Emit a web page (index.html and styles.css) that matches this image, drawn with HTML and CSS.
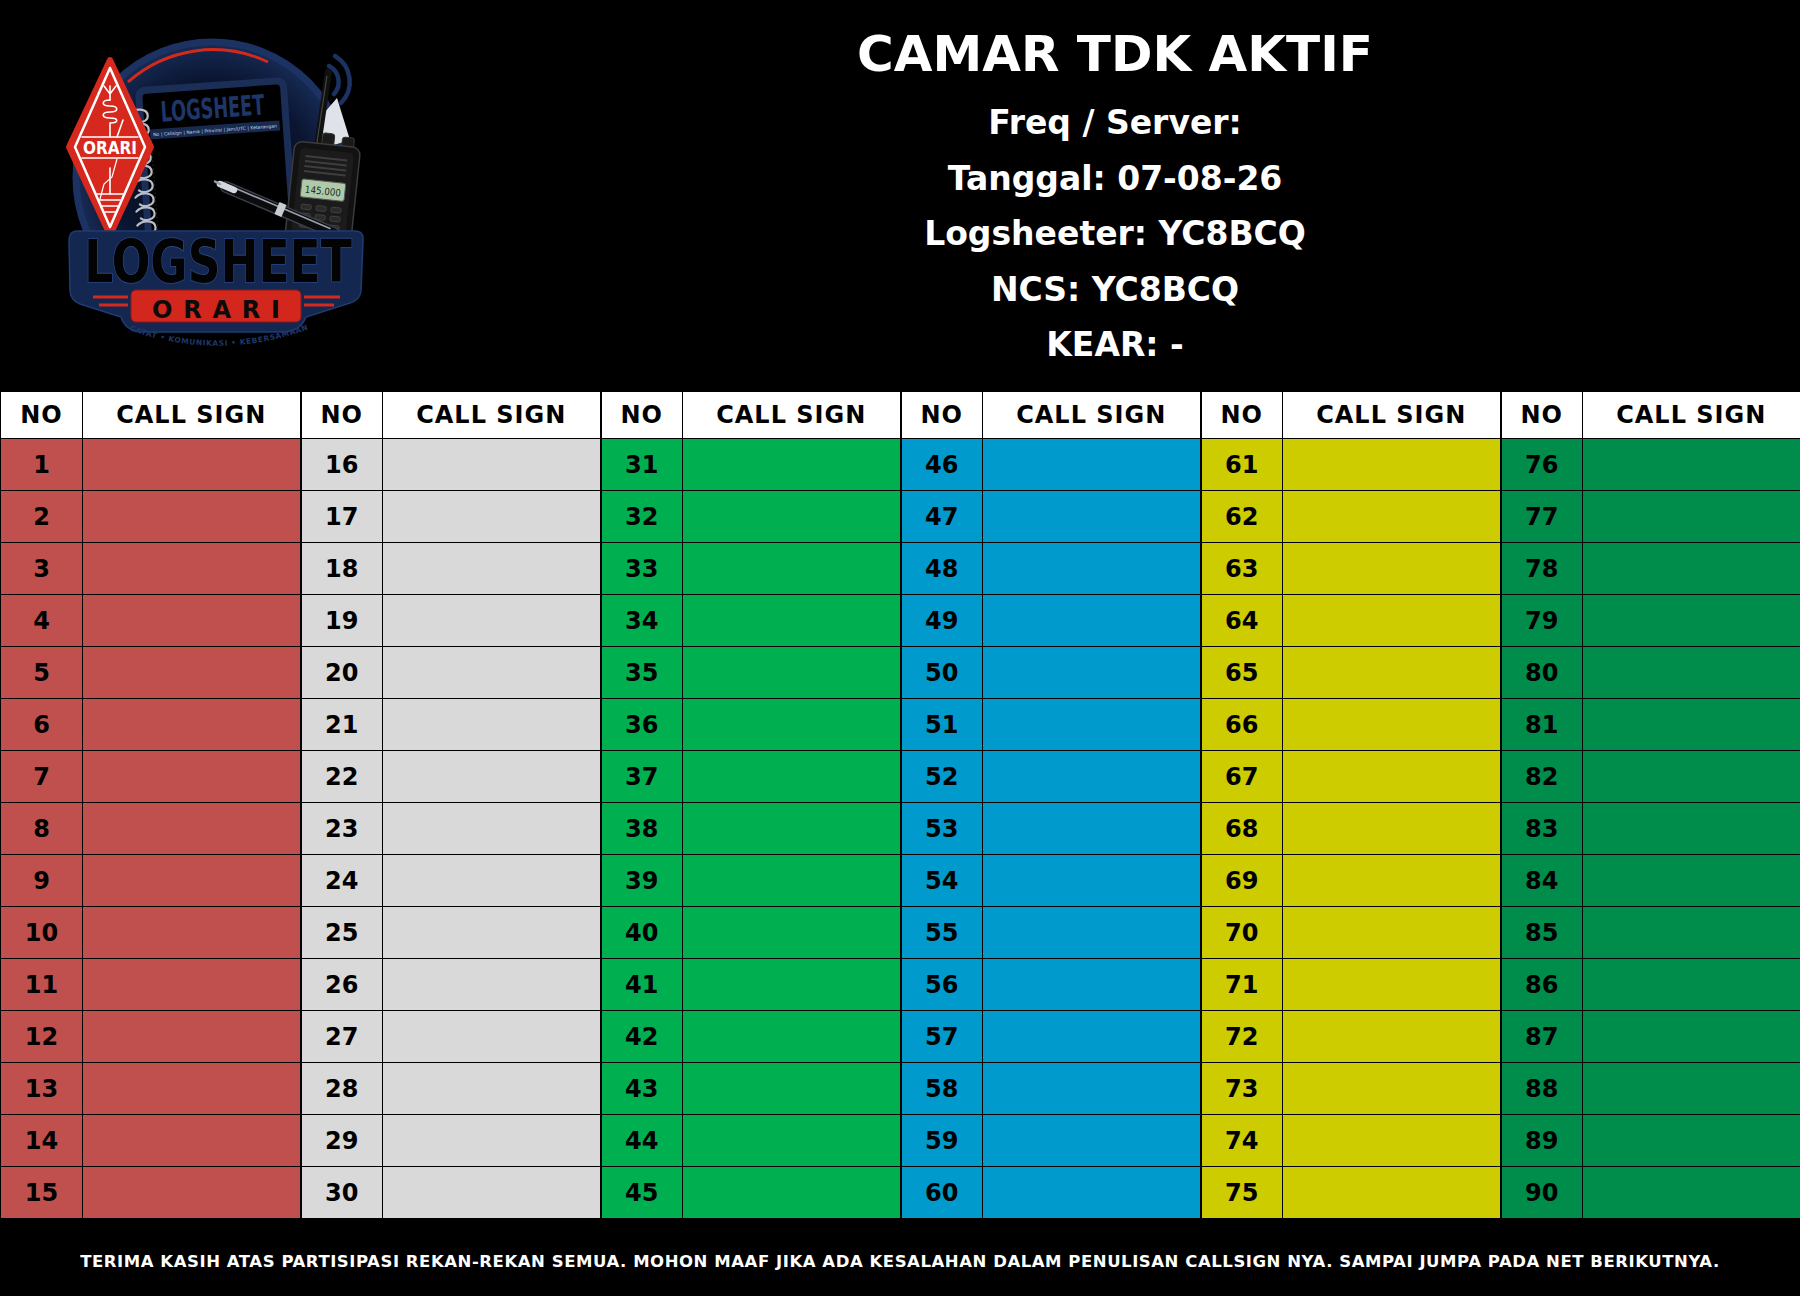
FILE: index.html
```html
<!DOCTYPE html>
<html lang="id">
<head>
<meta charset="utf-8">
<title>Logsheet ORARI - CAMAR TDK AKTIF</title>
<link rel="stylesheet" href="styles.css">
</head>
<body>
<div class="page">
  <header class="top">
    <div class="logo-col">
      <svg class="logo" width="310" height="330" viewBox="60 30 310 330" xmlns="http://www.w3.org/2000/svg">
        <defs>
          <radialGradient id="bgGrad" cx="50%" cy="50%" r="50%">
            <stop offset="0" stop-color="#03060e"/>
            <stop offset="0.72" stop-color="#0a1530"/>
            <stop offset="1" stop-color="#172b55"/>
          </radialGradient>
          <path id="arcText" d="M118,326 Q218,366 320,325"/>
        </defs>
        <circle cx="212" cy="178" r="136" fill="url(#bgGrad)" stroke="#1c3262" stroke-width="7"/>
        <path d="M128,82 A128,128 0 0 1 268,62" fill="none" stroke="#d42a1e" stroke-width="3"/>
        <polygon points="318,120 337,98 350,140 324,148" fill="#dfe2e8"/>
        <!-- notebook -->
        <g transform="rotate(-4 215 160)">
          <rect x="140" y="82" width="152" height="165" rx="9" fill="#1b2e58"/>
          <rect x="147" y="89" width="138" height="155" rx="4" fill="#000"/>
          <text x="216" y="118" text-anchor="middle" class="svg-bold" font-size="28" fill="#1f3668" textLength="104" lengthAdjust="spacingAndGlyphs">LOGSHEET</text>
          <rect x="152" y="125" width="130" height="10" fill="#172a50"/>
          <text x="155" y="132" class="svg-reg" font-size="4.6" fill="#c9d1e2" textLength="124" lengthAdjust="spacingAndGlyphs">No | Callsign | Nama | Provinsi | Jam/UTC | Keterangan</text>
          <line x1="153" y1="136" x2="153" y2="240" stroke="#222" stroke-width="1" stroke-dasharray="2 2"/>
          <g fill="none" stroke="#b8bdc7" stroke-width="2.2" stroke-linecap="round">
            <path d="M133,108 c6,-6 18,-4 18,3 c0,6 -10,8 -14,4"/>
            <path d="M133,122 c6,-6 18,-4 18,3 c0,6 -10,8 -14,4"/>
            <path d="M133,136 c6,-6 18,-4 18,3 c0,6 -10,8 -14,4"/>
            <path d="M133,150 c6,-6 18,-4 18,3 c0,6 -10,8 -14,4"/>
            <path d="M133,164 c6,-6 18,-4 18,3 c0,6 -10,8 -14,4"/>
            <path d="M133,178 c6,-6 18,-4 18,3 c0,6 -10,8 -14,4"/>
            <path d="M133,192 c6,-6 18,-4 18,3 c0,6 -10,8 -14,4"/>
            <path d="M133,206 c6,-6 18,-4 18,3 c0,6 -10,8 -14,4"/>
            <path d="M133,220 c6,-6 18,-4 18,3 c0,6 -10,8 -14,4"/>
          </g>
        </g>
        <!-- signal arcs -->
        <g fill="none" stroke="#1c3262" stroke-width="4.5" stroke-linecap="round">
          <path d="M329,66 A18,18 0 0 1 334,94"/>
          <path d="M335,56 A30,30 0 0 1 341,103"/>
        </g>
        <!-- radio -->
        <g transform="rotate(6 322 190)">
          <line x1="316" y1="72" x2="313" y2="146" stroke="#111" stroke-width="7" stroke-linecap="round"/>
          <line x1="315" y1="76" x2="312" y2="144" stroke="#444" stroke-width="1.2"/>
          <rect x="317" y="133" width="12" height="13" rx="3" fill="#1a1a1a" stroke="#363636"/>
          <rect x="337" y="135" width="12" height="11" rx="3" fill="#1a1a1a" stroke="#363636"/>
          <rect x="290" y="144" width="66" height="100" rx="8" fill="#121212" stroke="#3b3b3b" stroke-width="1.5"/>
          <rect x="296" y="150" width="54" height="90" rx="5" fill="#1b1b1b"/>
          <g stroke="#3e3e3e" stroke-width="2">
            <line x1="302" y1="158" x2="344" y2="158"/>
            <line x1="302" y1="163" x2="344" y2="163"/>
            <line x1="302" y1="168" x2="344" y2="168"/>
            <line x1="302" y1="173" x2="344" y2="173"/>
          </g>
          <rect x="301" y="181" width="44" height="18" rx="2" fill="#aecaa9" stroke="#5a5a5a"/>
          <text x="323" y="194.5" text-anchor="middle" class="svg-reg" font-size="10" fill="#1c2a1c" textLength="36" lengthAdjust="spacingAndGlyphs">145.000</text>
          <g fill="#2a2a2a" stroke="#474747" stroke-width="0.8">
            <rect x="303" y="206" width="10" height="5" rx="1.5"/>
            <rect x="318" y="206" width="10" height="5" rx="1.5"/>
            <rect x="333" y="206" width="10" height="5" rx="1.5"/>
            <rect x="303" y="215" width="10" height="5" rx="1.5"/>
            <rect x="318" y="215" width="10" height="5" rx="1.5"/>
            <rect x="333" y="215" width="10" height="5" rx="1.5"/>
            <rect x="303" y="224" width="10" height="5" rx="1.5"/>
            <rect x="318" y="224" width="10" height="5" rx="1.5"/>
            <rect x="333" y="224" width="10" height="5" rx="1.5"/>
          </g>
        </g>
        <!-- pen (in front of radio) -->
        <g stroke-linecap="round">
          <line x1="226" y1="187" x2="334" y2="233" stroke="#3a3f48" stroke-width="12"/>
          <line x1="226" y1="187" x2="334" y2="233" stroke="#0c0c0e" stroke-width="9"/>
          <line x1="236" y1="188.5" x2="330" y2="228.5" stroke="#9aa0ac" stroke-width="1.6"/>
          <line x1="220" y1="184" x2="234" y2="190" stroke="#d5d8de" stroke-width="6.5"/>
          <line x1="215" y1="181.5" x2="220" y2="184" stroke="#9aa0aa" stroke-width="2.5"/>
          <line x1="277" y1="208" x2="284" y2="211" stroke="#c9ccd2" stroke-width="13" stroke-linecap="butt"/>
        </g>
        <!-- ORARI diamond -->
        <polygon points="110,60 151,147 110,235 69,147" fill="#d6281d" stroke="#d6281d" stroke-width="6" stroke-linejoin="round"/>
        <polygon points="110,68 145,147 110,227 75,147" fill="#d6281d" stroke="#ffffff" stroke-width="2.5" stroke-linejoin="round"/>
        <g fill="none" stroke="#ffffff" stroke-width="1.6" stroke-linecap="round">
          <path d="M104,86 L110,94 L116,86 M110,86 V100"/>
          <path d="M110,100 c-9,0 -9,6 0,6 c9,0 9,6 0,6 c-9,0 -9,6 0,6 c9,0 9,5 0,5 V137"/>
          <line x1="123" y1="120" x2="117" y2="137"/>
          <line x1="82" y1="137" x2="138" y2="137"/>
          <line x1="82" y1="158" x2="138" y2="158"/>
          <path d="M117,159 L112,177 L104,184 L100,199" stroke-width="1.2"/>
          <line x1="110" y1="168" x2="110" y2="194"/>
          <line x1="97" y1="194" x2="123" y2="194"/>
          <line x1="99.5" y1="200" x2="120.5" y2="200"/>
          <line x1="102" y1="206" x2="118" y2="206"/>
          <line x1="104.5" y1="212" x2="115.5" y2="212"/>
        </g>
        <text x="110" y="154" text-anchor="middle" class="svg-bold" font-size="17" fill="#ffffff" textLength="54" lengthAdjust="spacingAndGlyphs">ORARI</text>
        <!-- banner -->
        <path d="M77,231 H355 Q364,231 363,241 L361,291 Q360,300 350,303 L306,317 Q301,330 286,332 H140 Q125,330 121,317 L80,304 Q70,300 70,290 L69,241 Q69,231 77,231 Z" fill="#132750" stroke="#203c72" stroke-width="1.5"/>
        <g stroke="#d42a1e" stroke-width="3">
          <line x1="93" y1="297" x2="128" y2="297"/>
          <line x1="99" y1="305" x2="128" y2="305"/>
          <line x1="304" y1="297" x2="340" y2="297"/>
          <line x1="304" y1="305" x2="334" y2="305"/>
        </g>
        <rect x="131" y="290" width="170" height="32" rx="5" fill="#d3261c" stroke="#8e1a14"/>
        <text x="216" y="318" text-anchor="middle" class="svg-bold" font-size="24" fill="#0b0b0b" textLength="128" lengthAdjust="spacing">ORARI</text>
        <text x="218" y="217.3" transform="scale(1 1.3)" text-anchor="middle" class="svg-bold" font-size="45.5" fill="#030303" stroke="#2a4682" stroke-width="1.3" paint-order="stroke">LOGSHEET</text>
        <text class="svg-bold" font-size="7.5" fill="#1f3666" letter-spacing="0.6"><textPath href="#arcText" startOffset="50%" text-anchor="middle">CATAT • KOMUNIKASI • KEBERSAMAAN</textPath></text>
      </svg>
    </div>
    <div class="info">
      <h1 class="title">CAMAR TDK AKTIF</h1>
      <p class="line">Freq / Server:</p>
      <p class="line">Tanggal: 07-08-26</p>
      <p class="line">Logsheeter: YC8BCQ</p>
      <p class="line">NCS: YC8BCQ</p>
      <p class="line">KEAR: -</p>
    </div>
  </header>

  <table class="log">
    <colgroup>
      <col class="c-no"><col class="c-cs"><col class="c-no"><col class="c-cs"><col class="c-no"><col class="c-cs">
      <col class="c-no"><col class="c-cs"><col class="c-no"><col class="c-cs"><col class="c-no"><col class="c-cs">
    </colgroup>
    <thead>
      <tr class="head">
        <th class="no">NO</th><th class="cs">CALL SIGN</th>
        <th class="no">NO</th><th class="cs">CALL SIGN</th>
        <th class="no">NO</th><th class="cs">CALL SIGN</th>
        <th class="no">NO</th><th class="cs">CALL SIGN</th>
        <th class="no">NO</th><th class="cs">CALL SIGN</th>
        <th class="no">NO</th><th class="cs">CALL SIGN</th>
      </tr>
    </thead>
    <tbody>
      <tr><td class="no red">1</td><td class="cs red"></td><td class="no gray">16</td><td class="cs gray"></td><td class="no green">31</td><td class="cs green"></td><td class="no blue">46</td><td class="cs blue"></td><td class="no yellow">61</td><td class="cs yellow"></td><td class="no dgreen">76</td><td class="cs dgreen"></td></tr>
      <tr><td class="no red">2</td><td class="cs red"></td><td class="no gray">17</td><td class="cs gray"></td><td class="no green">32</td><td class="cs green"></td><td class="no blue">47</td><td class="cs blue"></td><td class="no yellow">62</td><td class="cs yellow"></td><td class="no dgreen">77</td><td class="cs dgreen"></td></tr>
      <tr><td class="no red">3</td><td class="cs red"></td><td class="no gray">18</td><td class="cs gray"></td><td class="no green">33</td><td class="cs green"></td><td class="no blue">48</td><td class="cs blue"></td><td class="no yellow">63</td><td class="cs yellow"></td><td class="no dgreen">78</td><td class="cs dgreen"></td></tr>
      <tr><td class="no red">4</td><td class="cs red"></td><td class="no gray">19</td><td class="cs gray"></td><td class="no green">34</td><td class="cs green"></td><td class="no blue">49</td><td class="cs blue"></td><td class="no yellow">64</td><td class="cs yellow"></td><td class="no dgreen">79</td><td class="cs dgreen"></td></tr>
      <tr><td class="no red">5</td><td class="cs red"></td><td class="no gray">20</td><td class="cs gray"></td><td class="no green">35</td><td class="cs green"></td><td class="no blue">50</td><td class="cs blue"></td><td class="no yellow">65</td><td class="cs yellow"></td><td class="no dgreen">80</td><td class="cs dgreen"></td></tr>
      <tr><td class="no red">6</td><td class="cs red"></td><td class="no gray">21</td><td class="cs gray"></td><td class="no green">36</td><td class="cs green"></td><td class="no blue">51</td><td class="cs blue"></td><td class="no yellow">66</td><td class="cs yellow"></td><td class="no dgreen">81</td><td class="cs dgreen"></td></tr>
      <tr><td class="no red">7</td><td class="cs red"></td><td class="no gray">22</td><td class="cs gray"></td><td class="no green">37</td><td class="cs green"></td><td class="no blue">52</td><td class="cs blue"></td><td class="no yellow">67</td><td class="cs yellow"></td><td class="no dgreen">82</td><td class="cs dgreen"></td></tr>
      <tr><td class="no red">8</td><td class="cs red"></td><td class="no gray">23</td><td class="cs gray"></td><td class="no green">38</td><td class="cs green"></td><td class="no blue">53</td><td class="cs blue"></td><td class="no yellow">68</td><td class="cs yellow"></td><td class="no dgreen">83</td><td class="cs dgreen"></td></tr>
      <tr><td class="no red">9</td><td class="cs red"></td><td class="no gray">24</td><td class="cs gray"></td><td class="no green">39</td><td class="cs green"></td><td class="no blue">54</td><td class="cs blue"></td><td class="no yellow">69</td><td class="cs yellow"></td><td class="no dgreen">84</td><td class="cs dgreen"></td></tr>
      <tr><td class="no red">10</td><td class="cs red"></td><td class="no gray">25</td><td class="cs gray"></td><td class="no green">40</td><td class="cs green"></td><td class="no blue">55</td><td class="cs blue"></td><td class="no yellow">70</td><td class="cs yellow"></td><td class="no dgreen">85</td><td class="cs dgreen"></td></tr>
      <tr><td class="no red">11</td><td class="cs red"></td><td class="no gray">26</td><td class="cs gray"></td><td class="no green">41</td><td class="cs green"></td><td class="no blue">56</td><td class="cs blue"></td><td class="no yellow">71</td><td class="cs yellow"></td><td class="no dgreen">86</td><td class="cs dgreen"></td></tr>
      <tr><td class="no red">12</td><td class="cs red"></td><td class="no gray">27</td><td class="cs gray"></td><td class="no green">42</td><td class="cs green"></td><td class="no blue">57</td><td class="cs blue"></td><td class="no yellow">72</td><td class="cs yellow"></td><td class="no dgreen">87</td><td class="cs dgreen"></td></tr>
      <tr><td class="no red">13</td><td class="cs red"></td><td class="no gray">28</td><td class="cs gray"></td><td class="no green">43</td><td class="cs green"></td><td class="no blue">58</td><td class="cs blue"></td><td class="no yellow">73</td><td class="cs yellow"></td><td class="no dgreen">88</td><td class="cs dgreen"></td></tr>
      <tr><td class="no red">14</td><td class="cs red"></td><td class="no gray">29</td><td class="cs gray"></td><td class="no green">44</td><td class="cs green"></td><td class="no blue">59</td><td class="cs blue"></td><td class="no yellow">74</td><td class="cs yellow"></td><td class="no dgreen">89</td><td class="cs dgreen"></td></tr>
      <tr><td class="no red">15</td><td class="cs red"></td><td class="no gray">30</td><td class="cs gray"></td><td class="no green">45</td><td class="cs green"></td><td class="no blue">60</td><td class="cs blue"></td><td class="no yellow">75</td><td class="cs yellow"></td><td class="no dgreen">90</td><td class="cs dgreen"></td></tr>
    </tbody>
  </table>

  <footer class="foot">
    <p class="thanks">TERIMA KASIH ATAS PARTISIPASI REKAN-REKAN SEMUA. MOHON MAAF JIKA ADA KESALAHAN DALAM PENULISAN CALLSIGN NYA. SAMPAI JUMPA PADA NET BERIKUTNYA.</p>
  </footer>
</div>
</body>
</html>
```

FILE: styles.css
```css
* { box-sizing: border-box; }

html, body {
  margin: 0;
  padding: 0;
  background: #000;
}

body {
  width: 1800px;
  height: 1296px;
  overflow: hidden;
  font-family: "DejaVu Sans", "Liberation Sans", sans-serif;
  font-weight: bold;
  color: #000;
}

.page {
  width: 1800px;
  display: flex;
  flex-direction: column;
}

/* ---------- header ---------- */
.top {
  height: 391px;
  display: flex;
  background: #000;
}

.logo-col {
  width: 430px;
  flex: 0 0 430px;
  padding: 30px 0 0 60px;
}

.logo {
  display: block;
}

.svg-bold {
  font-family: "DejaVu Sans", sans-serif;
  font-weight: bold;
}

.svg-reg {
  font-family: "DejaVu Sans", sans-serif;
  font-weight: normal;
}

.info {
  flex: 1 1 auto;
  display: flex;
  flex-direction: column;
  align-items: center;
  padding-top: 19px;
  color: #fff;
}

.title {
  margin: 0 0 6px 0;
  font-size: 50px;
  line-height: 70px;
  font-weight: bold;
  color: #fff;
}

.line {
  margin: 0;
  font-size: 33px;
  line-height: 55.5px;
  font-weight: bold;
  color: #fff;
}

/* ---------- table ---------- */
.log {
  width: 1800px;
  table-layout: fixed;
  border-collapse: collapse;
}

.c-no { width: 82px; }
.c-cs { width: 218px; }

.log th,
.log td {
  border: 1px solid #000;
  padding: 0;
  text-align: center;
  vertical-align: middle;
  font-size: 24px;
  font-weight: bold;
  color: #000;
}

.log th.cs,
.log td.cs {
  border-right: 2px solid #000;
}

.log th {
  background: #fff;
  letter-spacing: 1px;
}

.log tr.head { height: 47px; }
.log tbody tr { height: 52px; }

.red    { background: #c0504d; }
.gray   { background: #d9d9d9; }
.green  { background: #00b050; }
.blue   { background: #009bcc; }
.yellow { background: #cccc00; }
.dgreen { background: #008d4c; }

/* ---------- footer ---------- */
.foot {
  height: 78px;
  display: flex;
  align-items: center;
  justify-content: center;
  padding-top: 6px;
}

.thanks {
  margin: 0;
  color: #fff;
  font-size: 16.5px;
  letter-spacing: 0.55px;
  font-weight: bold;
  white-space: nowrap;
}
```
